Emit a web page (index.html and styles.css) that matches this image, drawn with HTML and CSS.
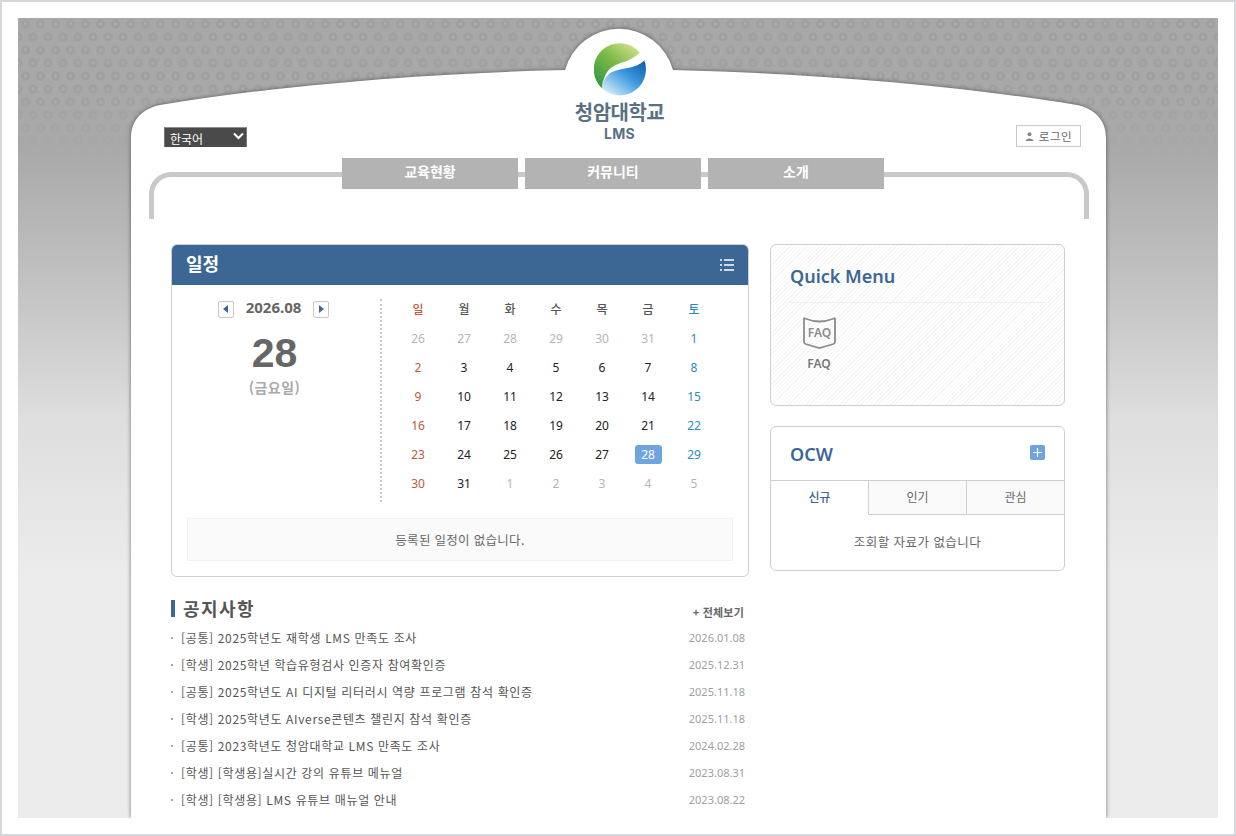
FILE: index.html
```html
<!DOCTYPE html>
<html lang="ko">
<head>
    <meta charset="UTF-8">
    <meta name="viewport" content="width=device-width, initial-scale=1.0">
    <title>청암대학교 LMS</title>
    <link rel="stylesheet" href="styles.css">
</head>
<body>
    <div class="frame">
        <div class="stage">
            <div class="dots"></div>
            <div class="sheet">
                <!-- white sheet with the curved top and the bubble behind the logo -->
                <div class="sheet-bg">
                    <svg class="sheet-top" width="975" height="131" viewBox="0 0 975 131">
                        <path fill="#fff" d="M0 131 L0 120 C0 102 11 91 29 87 C150 67 300 55 434 52 A56 56 0 0 1 542 52 C675 55 825 67 946 87 C964 91 975 102 975 120 L975 131 Z"/>
                    </svg>
                    <div class="sheet-fill"></div>
                </div>

                <div class="sheet-inner">
                    <div class="topbar">
                        <div class="lang">
                            <select class="lang-select">
                                <option>한국어</option>
                            </select>
                            <svg class="lang-arrow" width="11" height="8" viewBox="0 0 11 8">
                                <path d="M1 1.500 L5.500 6 L10 1.500" fill="none" stroke="#fff" stroke-width="2"/>
                            </svg>
                        </div>
                        <div class="logo">
                            <svg width="52" height="53" viewBox="0 0 52 53">
                                <defs>
                                    <linearGradient id="logoGreen" x1="0.8" y1="0" x2="0.1" y2="0.9">
                                        <stop offset="0" stop-color="#cfe08a"/>
                                        <stop offset="0.45" stop-color="#7fbb48"/>
                                        <stop offset="1" stop-color="#369843"/>
                                    </linearGradient>
                                    <linearGradient id="logoBlue" x1="0.95" y1="0.05" x2="0.1" y2="0.95">
                                        <stop offset="0" stop-color="#0f62ab"/>
                                        <stop offset="0.45" stop-color="#3f9ae0"/>
                                        <stop offset="1" stop-color="#d6eef9"/>
                                    </linearGradient>
                                </defs>
                                <path fill="url(#logoBlue)" d="M50.400 17.600 A26 26 0 0 1 8.300 45.500 C8.500 40 10 36 14 32 C18 27.500 26 26.500 34 25 C41 24 46 21.500 50.400 17.600 Z"/>
                                <path fill="url(#logoGreen)" d="M45.900 9.800 A26 26 0 1 0 8.300 45.500 C7.500 42 9 38 11 33 C14 25 22 21 30 19 C36 17 41 14 45.900 9.800 Z"/>
                            </svg>
                            <div class="logo-name">청암대학교</div>
                            <div class="logo-sub">LMS</div>
                        </div>
                        <div class="login-wrap">
                            <a class="login">
                                <svg width="9" height="9" viewBox="0 0 9 9">
                                    <circle cx="4.500" cy="2.200" r="2" fill="#888"/>
                                    <path d="M.5 9 C.5 5.500 8.500 5.500 8.500 9 Z" fill="#888"/>
                                </svg>
                                로그인
                            </a>
                        </div>
                    </div>

                    <div class="nav-frame">
                        <div class="nav">
                            <a class="nav-tab">교육현황</a>
                            <a class="nav-tab">커뮤니티</a>
                            <a class="nav-tab">소개</a>
                        </div>
                    </div>

                    <div class="content">
                        <div class="main-col">
                            <div class="schedule">
                                <div class="schedule-head">
                                    <h2>일정</h2>
                                    <svg width="14" height="12" viewBox="0 0 14 12">
                                        <path d="M0 1 H2 M4 1 H14 M0 6 H2 M4 6 H14 M0 11 H2 M4 11 H14" stroke="#fff" stroke-width="1.600"/>
                                    </svg>
                                </div>
                                <div class="schedule-body">
                                    <div class="today">
                                        <div class="month-nav">
                                            <a class="month-btn">
                                                <svg width="6" height="8" viewBox="0 0 6 8"><path d="M5 0 V8 L0 4 Z" fill="#3c6795"/></svg>
                                            </a>
                                            <span class="month-label">2026.08</span>
                                            <a class="month-btn">
                                                <svg width="6" height="8" viewBox="0 0 6 8"><path d="M1 0 V8 L6 4 Z" fill="#3c6795"/></svg>
                                            </a>
                                        </div>
                                        <div class="today-num">28</div>
                                        <div class="today-day">(금요일)</div>
                                    </div>
                                    <div class="calendar">
                                        <span class="wd sun">일</span><span class="wd">월</span><span class="wd">화</span><span class="wd">수</span><span class="wd">목</span><span class="wd">금</span><span class="wd sat">토</span>
                                        <span class="off">26</span><span class="off">27</span><span class="off">28</span><span class="off">29</span><span class="off">30</span><span class="off">31</span><span class="sat">1</span>
                                        <span class="sun">2</span><span>3</span><span>4</span><span>5</span><span>6</span><span>7</span><span class="sat">8</span>
                                        <span class="sun">9</span><span>10</span><span>11</span><span>12</span><span>13</span><span>14</span><span class="sat">15</span>
                                        <span class="sun">16</span><span>17</span><span>18</span><span>19</span><span>20</span><span>21</span><span class="sat">22</span>
                                        <span class="sun">23</span><span>24</span><span>25</span><span>26</span><span>27</span><span class="cur"><b>28</b></span><span class="sat">29</span>
                                        <span class="sun">30</span><span>31</span><span class="off">1</span><span class="off">2</span><span class="off">3</span><span class="off">4</span><span class="off">5</span>
                                    </div>
                                </div>
                                <div class="schedule-msg">등록된 일정이 없습니다.</div>
                            </div>

                            <div class="notice">
                                <div class="notice-head">
                                    <h3>공지사항</h3>
                                    <a class="more"><i>+</i> 전체보기</a>
                                </div>
                                <ul class="notice-list">
                                    <li><a>[공통] 2025학년도 재학생 LMS 만족도 조사</a><span>2026.01.08</span></li>
                                    <li><a>[학생] 2025학년 학습유형검사 인증자 참여확인증</a><span>2025.12.31</span></li>
                                    <li><a>[공통] 2025학년도 AI 디지털 리터러시 역량 프로그램 참석 확인증</a><span>2025.11.18</span></li>
                                    <li><a>[학생] 2025학년도 AIverse콘텐츠 챌린지 참석 확인증</a><span>2025.11.18</span></li>
                                    <li><a>[공통] 2023학년도 청암대학교 LMS 만족도 조사</a><span>2024.02.28</span></li>
                                    <li><a>[학생] [학생용]실시간 강의 유튜브 메뉴얼</a><span>2023.08.31</span></li>
                                    <li><a>[학생] [학생용] LMS 유튜브 매뉴얼 안내</a><span>2023.08.22</span></li>
                                </ul>
                            </div>
                        </div>

                        <div class="side-col">
                            <div class="quick">
                                <h3 class="side-title">Quick Menu</h3>
                                <a class="quick-item">
                                    <svg width="33" height="33" viewBox="0 0 33 33">
                                        <path d="M2 2.500 C1.500 2 1 2.200 1 3 V26 C1 27 1.500 27.500 2.500 28 L16.500 32 L30.500 28 C31.500 27.500 32 27 32 26 V3 C32 2.200 31.500 2 31 2.500 C26 4.500 21 5.500 16.500 5.500 C12 5.500 7 4.500 2 2.500 Z" fill="none" stroke="#8d8d8d" stroke-width="1.800"/>
                                        <text x="16.500" y="21" text-anchor="middle" class="faq-text">FAQ</text>
                                    </svg>
                                    <span>FAQ</span>
                                </a>
                            </div>

                            <div class="ocw">
                                <div class="ocw-head">
                                    <h3 class="side-title">OCW</h3>
                                    <a class="ocw-plus">
                                        <svg width="15" height="15" viewBox="0 0 15 15"><path d="M3 7.500 H12 M7.500 3 V12" stroke="#fff" stroke-width="1.200"/></svg>
                                    </a>
                                </div>
                                <div class="ocw-tabs">
                                    <a class="ocw-tab active">신규</a>
                                    <a class="ocw-tab">인기</a>
                                    <a class="ocw-tab">관심</a>
                                </div>
                                <div class="ocw-msg">조회할 자료가 없습니다</div>
                            </div>
                        </div>
                    </div>
                </div>
            </div>
        </div>
    </div>
</body>
</html>
```

FILE: styles.css
```css
* {
    box-sizing: border-box;
}
html, body {
    margin: 0;
    height: 100%;
    overflow: hidden;
}
body {
    font-family: "Noto Sans CJK KR", "Noto Sans", sans-serif;
    font-size: 12px;
    color: #555;
    background-color: white;
}
a {
    color: inherit;
    text-decoration: none;
}
h2, h3, ul {
    margin: 0;
    padding: 0;
}

.frame {
    height: 836px;
    padding: 16px;
    border: 2px solid #d5d7dc;
}
.stage {
    position: relative;
    height: 800px;
    overflow: hidden;
    background: linear-gradient(#a8a8a8 0, #a9a9a9 130px, #bdbdbd 240px, #dedede 400px, #ececec 560px);
}
.dots {
    --dot: radial-gradient(circle at center, #a9a9a9 0 1.5px, #a0a0a0 2px 4px, rgba(160,160,160,0) 5px);
    position: absolute;
    top: 0;
    left: 0;
    right: 0;
    height: 140px;
    background-image: var(--dot), var(--dot);
    background-size: 15px 26px;
    background-position: 0 -7px, 7.5px 6px;
    filter: blur(.4px);
    -webkit-mask-image: linear-gradient(#000 70px, transparent 135px);
    mask-image: linear-gradient(#000 70px, transparent 135px);
}

.sheet {
    position: relative;
    width: 975px;
    height: 800px;
    margin-left: 113px;
}
.sheet-bg {
    position: absolute;
    top: 0;
    left: 0;
    right: 0;
    bottom: 0;
    display: flex;
    flex-direction: column;
    filter: drop-shadow(0 0 2px rgba(0,0,0,.5));
}
.sheet-top {
    display: block;
    flex: none;
}
.sheet-fill {
    flex: 1;
    margin-top: -1px;
    background-color: white;
}
.sheet-inner {
    position: relative;
    padding-top: 25px;
}

.topbar {
    display: grid;
    grid-template-columns: 1fr auto 1fr;
    align-items: end;
    height: 104px;
    padding: 0 25px 0 33px;
}
.lang {
    position: relative;
    width: 83px;
    height: 20px;
}
.lang-select {
    display: block;
    width: 83px;
    height: 20px;
    padding: 2px 0 0 5px;
    border: none;
    border-top: 1px solid #8f8f8f;
    border-left: 1px solid #777;
    border-right: 1px solid #777;
    border-radius: 0;
    appearance: none;
    background-color: #4a4a4a;
    color: white;
    font-family: inherit;
    font-size: 12px;
    line-height: 16px;
}
.lang-arrow {
    position: absolute;
    top: 5px;
    right: 3px;
}
.logo {
    display: flex;
    flex-direction: column;
    align-items: center;
    height: 104px;
    margin-left: -6px;
}
.logo svg {
    display: block;
    flex: none;
}
.logo-name {
    margin-top: 3px;
    font-size: 20px;
    font-weight: 700;
    line-height: 26px;
    letter-spacing: -.5px;
    color: #587284;
}
.logo-sub {
    margin-top: 1px;
    font-family: Inter, sans-serif;
    font-size: 14px;
    font-weight: 700;
    letter-spacing: .3px;
    line-height: 15px;
    color: #587284;
}
.login-wrap {
    display: flex;
    justify-content: flex-end;
}
.login {
    display: flex;
    align-items: center;
    justify-content: center;
    gap: 5px;
    width: 65px;
    height: 22px;
    border: 1px solid #c9c9c9;
    font-size: 11.500px;
    letter-spacing: .6px;
    color: #666;
}

.nav-frame {
    height: 47px;
    margin: 25px 17px 0 18px;
    border: 5px solid #c9c9c9;
    border-bottom: none;
    border-radius: 22px 22px 0 0;
}
.nav {
    display: flex;
    justify-content: center;
    gap: 7px;
    margin-top: -19px;
    padding-right: 12px;
}
.nav-tab {
    width: 176px;
    height: 31px;
    background-color: #b3b3b3;
    color: white;
    font-size: 14px;
    font-weight: 700;
    line-height: 26px;
    text-align: center;
}

.content {
    display: flex;
    gap: 21px;
    margin-top: 25px;
    padding-left: 40px;
}
.main-col {
    flex: none;
    width: 578px;
}
.side-col {
    flex: none;
    width: 295px;
}

.schedule {
    height: 333px;
    overflow: hidden;
    background-color: white;
    border: 1px solid #cfcfcf;
    border-radius: 6px;
}
.schedule-head {
    display: flex;
    align-items: center;
    justify-content: space-between;
    height: 41px;
    margin: -1px -1px 0;
    padding: 0 15px;
    background-color: #3c6795;
}
.schedule-head h2 {
    margin-top: -3px;
    color: white;
    font-size: 18px;
    font-weight: 700;
    line-height: 38px;
}
.schedule-body {
    display: flex;
    height: 233px;
}
.today {
    flex: none;
    width: 210px;
    height: 203px;
    margin-top: 14px;
    border-right: 2px dotted #ccc;
    text-align: center;
}
.month-nav {
    display: flex;
    align-items: center;
    justify-content: center;
    gap: 12px;
    padding-right: 5px;
    height: 18px;
    margin-top: 1px;
}
.month-btn {
    display: flex;
    align-items: center;
    justify-content: center;
    width: 16px;
    height: 17px;
    border: 1px solid #c8c8c8;
    border-radius: 2px;
    background-color: #fdfdfd;
}
.month-label {
    margin-top: -5px;
    font-family: "Noto Sans", sans-serif;
    font-size: 15px;
    font-weight: 700;
    color: #666;
}
.today-num {
    padding-right: 3px;
    margin-top: 10px;
    font-family: "Liberation Sans", sans-serif;
    font-size: 41px;
    font-weight: 700;
    line-height: 50px;
    color: #666;
}
.today-day {
    padding-right: 3px;
    font-size: 14px;
    font-weight: 700;
    letter-spacing: .5px;
    line-height: 19px;
    color: #aaa;
}
.calendar {
    display: grid;
    grid-template-columns: repeat(7, 46px);
    grid-template-rows: 31px repeat(6, 29px);
    margin-left: 13px;
    padding-top: 8px;
    font-family: "Noto Sans", "Noto Sans CJK KR", sans-serif;
    font-size: 12px;
    color: #222;
    text-align: center;
}
.calendar span {
    display: flex;
    align-items: center;
    justify-content: center;
}
.calendar .wd {
    font-family: "Noto Sans CJK KR", sans-serif;
    font-weight: 500;
    color: #555;
    padding-bottom: 1px;
}
.calendar .sun {
    color: #c0583d;
}
.calendar .sat {
    color: #2b8db8;
}
.calendar .off {
    color: #b5b5b5;
}
.calendar .cur b {
    width: 27px;
    height: 19px;
    border-radius: 3px;
    background-color: #6ea5de;
    color: white;
    font-weight: 400;
    line-height: 19px;
}
.schedule-msg {
    height: 43px;
    margin: 0 15px;
    background-color: #fafafa;
    border: 1px solid #f1f1f1;
    font-size: 12.500px;
    letter-spacing: .3px;
    line-height: 41px;
    color: #666;
    text-align: center;
}

.notice {
    margin-top: 19px;
}
.notice-head {
    display: flex;
    align-items: center;
    justify-content: space-between;
    height: 28px;
    padding-right: 5px;
}
.notice-head h3 {
    margin-top: -3px;
    padding-left: 8px;
    border-left: 4px solid #3c6795;
    font-size: 18px;
    font-weight: 700;
    letter-spacing: 1.400px;
    line-height: 17px;
    color: #555;
}
.more {
    margin-top: 3px;
    font-size: 11px;
    font-weight: 700;
    letter-spacing: .2px;
    color: #666;
}
.more i {
    font-style: normal;
}
.notice-list {
    list-style: none;
}
.notice-list li {
    display: flex;
    justify-content: space-between;
    align-items: center;
    height: 27px;
    padding: 0 4px 0 10px;
    position: relative;
}
.notice-list li::before {
    content: "";
    position: absolute;
    top: 13px;
    left: 0;
    width: 2px;
    height: 2px;
    background-color: #aaa;
}
.notice-list a {
    color: #555;
    font-size: 12px;
    letter-spacing: .65px;
}
.notice-list span {
    font-family: "Noto Sans", sans-serif;
    font-size: 11px;
    color: #a0a0a0;
}

.side-title {
    font-family: "Noto Sans", sans-serif;
    font-size: 18px;
    font-weight: 600;
    color: #3c6795;
}
.quick {
    height: 162px;
    padding: 18px 19px 0;
    border: 1px solid #cfcfcf;
    border-radius: 6px;
    background: repeating-linear-gradient(135deg, #fff 0 2px, #f6f6f6 2px 3px);
}
.quick .side-title {
    height: 40px;
    border-bottom: 1px solid #eee;
    line-height: 26px;
}
.quick-item {
    display: flex;
    flex-direction: column;
    align-items: center;
    width: 58px;
    margin-top: 13px;
    font-family: "Noto Sans", sans-serif;
    font-size: 12px;
    font-weight: 600;
    color: #777;
}
.quick-item svg {
    display: block;
    margin-bottom: 6px;
}
.faq-text {
    font-family: "Noto Sans", sans-serif;
    font-size: 12px;
    font-weight: 600;
    fill: #8a8a8a;
}
.ocw {
    height: 145px;
    margin-top: 20px;
    overflow: hidden;
    border: 1px solid #cfcfcf;
    border-radius: 6px;
}
.ocw-head {
    display: flex;
    justify-content: space-between;
    align-items: flex-start;
    height: 53px;
    padding: 14px 19px 0;
}
.ocw-head .side-title {
    line-height: 26px;
}
.ocw-plus {
    display: block;
    width: 15px;
    height: 15px;
    margin-top: 4px;
    border-radius: 2px;
    background-color: #6ea5de;
}
.ocw-plus svg {
    display: block;
}
.ocw-tabs {
    display: flex;
    height: 35px;
    border-top: 1px solid #cfcfcf;
}
.ocw-tab {
    flex: 1;
    border-left: 1px solid #cfcfcf;
    border-bottom: 1px solid #cfcfcf;
    background-color: #fafafa;
    font-size: 12px;
    line-height: 32px;
    color: #666;
    text-align: center;
}
.ocw-tab.active {
    flex: none;
    width: 97px;
    border-left: none;
    border-bottom: none;
    background-color: white;
    font-weight: 500;
    color: #3c6795;
}
.ocw-msg {
    height: 55px;
    font-size: 12.500px;
    letter-spacing: .45px;
    line-height: 54px;
    color: #666;
    text-align: center;
}
```
